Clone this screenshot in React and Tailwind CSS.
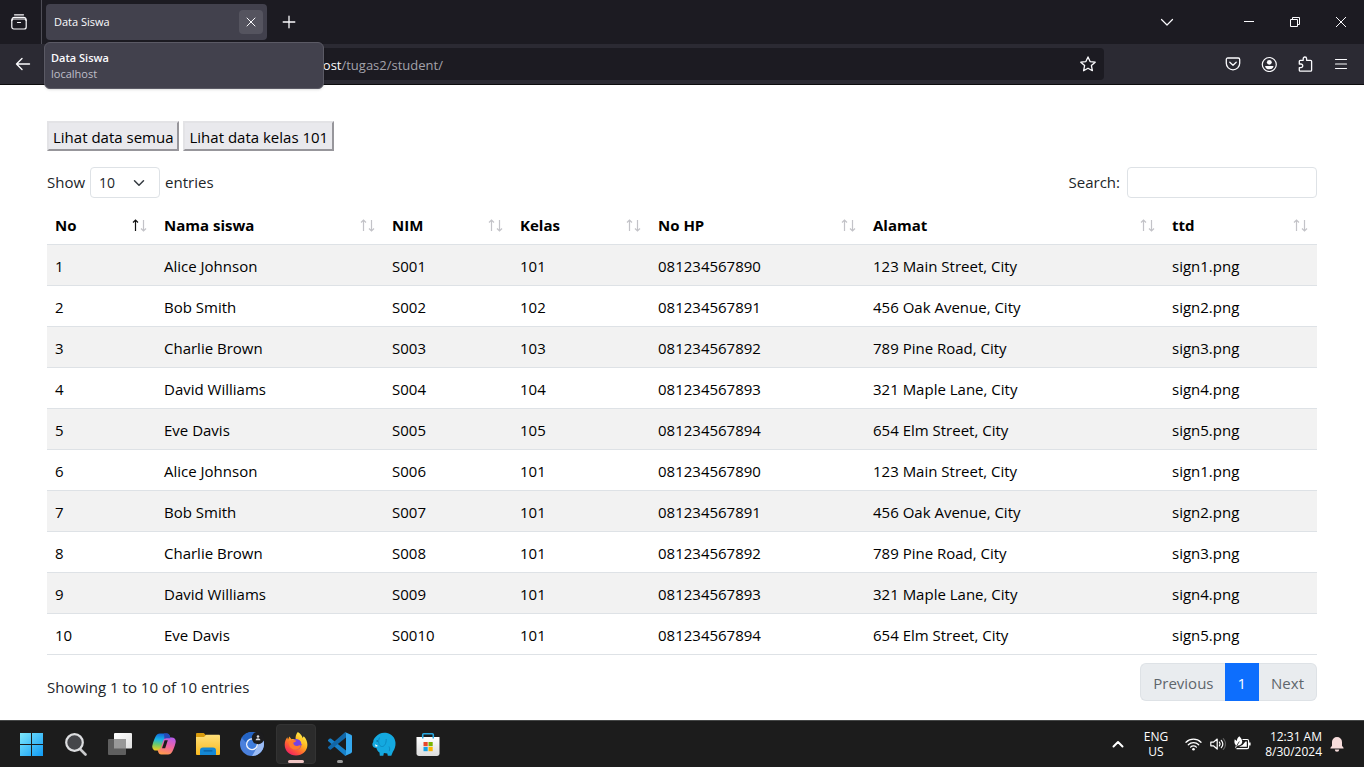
import React, { useState } from "react";

const columns = [
  { label: "No", width: "w-[109px]" },
  { label: "Nama siswa", width: "w-[228px]" },
  { label: "NIM", width: "w-[128px]" },
  { label: "Kelas", width: "w-[138px]" },
  { label: "No HP", width: "w-[215px]" },
  { label: "Alamat", width: "w-[299px]" },
  { label: "ttd", width: "w-[153px]" },
];

const students = [
  ["1", "Alice Johnson", "S001", "101", "081234567890", "123 Main Street, City", "sign1.png"],
  ["2", "Bob Smith", "S002", "102", "081234567891", "456 Oak Avenue, City", "sign2.png"],
  ["3", "Charlie Brown", "S003", "103", "081234567892", "789 Pine Road, City", "sign3.png"],
  ["4", "David Williams", "S004", "104", "081234567893", "321 Maple Lane, City", "sign4.png"],
  ["5", "Eve Davis", "S005", "105", "081234567894", "654 Elm Street, City", "sign5.png"],
  ["6", "Alice Johnson", "S006", "101", "081234567890", "123 Main Street, City", "sign1.png"],
  ["7", "Bob Smith", "S007", "101", "081234567891", "456 Oak Avenue, City", "sign2.png"],
  ["8", "Charlie Brown", "S008", "101", "081234567892", "789 Pine Road, City", "sign3.png"],
  ["9", "David Williams", "S009", "101", "081234567893", "321 Maple Lane, City", "sign4.png"],
  ["10", "Eve Davis", "S0010", "101", "081234567894", "654 Elm Street, City", "sign5.png"],
];

function Line({ children, size = 16, width = 1.25, className = "" }) {
  return (
    <svg
      width={size}
      height={size}
      viewBox="0 0 16 16"
      fill="none"
      stroke="currentColor"
      strokeWidth={width}
      strokeLinecap="round"
      strokeLinejoin="round"
      className={className}
      aria-hidden="true"
    >
      {children}
    </svg>
  );
}

function IconButton({ label, className = "", children }) {
  return (
    <button type="button" aria-label={label} className={`flex shrink-0 items-center justify-center ${className}`}>
      {children}
    </button>
  );
}

function TabStrip() {
  return (
    <div className="flex h-11 items-center bg-[#1c1b22]">
      <div className="flex h-11 w-[42px] shrink-0 items-center border-r border-[#4f4e57]">
        <IconButton label="Firefox View" className="h-9 w-[38px]">
          <Line width={1.2}>
            <path d="M3.500 .8h9" />
            <rect x=".8" y="5" width="14.4" height="10" rx="2" />
            <path d="M6.500 8.500h3" />
            <path d="M.8 6.400c0-1.800 1-3 2.600-3h9.200c1.600 0 2.600 1.200 2.600 3" />
          </Line>
        </IconButton>
      </div>
      <div className="ml-1 flex h-9 w-[221px] items-center justify-between rounded bg-[#42414d] pl-2 pr-1">
        <span className="pt-px text-[11px]">Data Siswa</span>
        <IconButton label="Close tab" className="h-6 w-6 rounded bg-[#55545f]">
          <Line width={1}>
            <path d="M4 4l8 8M12 4l-8 8" />
          </Line>
        </IconButton>
      </div>
      <IconButton label="New tab" className="h-9 w-11">
        <Line width={1.3}>
          <path d="M8 2.200v11.600M2.200 8h11.600" />
        </Line>
      </IconButton>
      <div className="ml-auto flex items-center">
        <IconButton label="List all tabs" className="mr-[41px] h-9 w-9">
          <Line width={1.2}>
            <path d="M2.500 5.500L8 11l5.500-5.500" />
          </Line>
        </IconButton>
        <IconButton label="Minimize" className="h-11 w-[46px]">
          <svg width="10" height="10" viewBox="0 0 10 10" fill="none" stroke="currentColor" aria-hidden="true">
            <path d="M0 4.500h10" />
          </svg>
        </IconButton>
        <IconButton label="Restore" className="h-11 w-[46px]">
          <svg width="10" height="10" viewBox="0 0 10 10" fill="none" stroke="currentColor" aria-hidden="true">
            <path d="M.5 2.500h7v7h-7zM2.500 2.500v-2h7v7h-2" />
          </svg>
        </IconButton>
        <IconButton label="Close" className="h-11 w-[46px]">
          <svg width="10" height="10" viewBox="0 0 10 10" fill="none" stroke="currentColor" aria-hidden="true">
            <path d="M0 0l10 10M10 0L0 10" />
          </svg>
        </IconButton>
      </div>
    </div>
  );
}

function Toolbar() {
  return (
    <div className="flex h-[41px] items-center border-b border-[#0c0c0d] bg-[#2b2a33]">
      <div className="w-[260px] shrink-0 pl-1">
        <IconButton label="Back" className="h-9 w-[38px]">
          <Line width={1.4}>
            <path d="M14.500 8H1.500M7 2.500L1.500 8L7 13.500" />
          </Line>
        </IconButton>
      </div>
      <div className="flex h-8 min-w-0 flex-1 items-center justify-between rounded bg-[#1c1b22] pl-[27px]">
        <div role="textbox" aria-label="Address" className="pt-[3px] text-[13px] text-[#a3a2ab]">
          <span className="text-[#fbfbfe]">localhost</span>/tugas2/student/
        </div>
        <IconButton label="Bookmark this page" className="h-8 w-8">
          <Line width={1.3}>
            <path d="M8 .9l2.100 4.700 5.100.6-3.800 3.400 1 5.100L8 12.200l-4.400 2.500 1-5.100L.8 6.200l5.100-.6z" />
          </Line>
        </IconButton>
      </div>
      <div className="flex w-[260px] shrink-0 justify-end pr-[5px]">
        <IconButton label="Save to Pocket" className="h-8 w-9">
          <Line width={1.3}>
            <path d="M2.800 2h10.400c.9 0 1.500.6 1.500 1.500v3.800a6.700 6.500 0 0 1-13.400 0V3.500C1.300 2.600 1.900 2 2.800 2z" />
            <path d="M4.800 6.300L8 9.300l3.200-3" />
          </Line>
        </IconButton>
        <IconButton label="Account" className="h-8 w-9">
          <Line width={1.2}>
            <circle cx="8.300" cy="8.500" r="7" />
            <circle cx="8.300" cy="6.300" r="2.400" fill="currentColor" stroke="none" />
            <path d="M4.100 9.900h8.400c0 2-1.900 3.400-4.200 3.400s-4.200-1.400-4.200-3.400z" fill="currentColor" stroke="none" />
          </Line>
        </IconButton>
        <IconButton label="Extensions" className="h-8 w-9">
          <Line width={1.3}>
            <path d="M2.300 8V5.300c0-.6.400-1 1-1h2.900V2.700a1.700 1.700 0 0 1 3.400 0v1.600h4c.6 0 1 .4 1 1v8.900c0 .6-.4 1-1 1H3.300c-.6 0-1-.4-1-1v-2.500h1.600a1.800 1.800 0 0 0 0-3.700z" />
          </Line>
        </IconButton>
        <IconButton label="Open menu" className="h-8 w-9">
          <Line width={1.2}>
            <path d="M2.500 3.500h11M2.500 8h11M2.500 12.500h11" />
          </Line>
        </IconButton>
      </div>
    </div>
  );
}

function BrowserChrome() {
  return (
    <header className="relative text-[#fbfbfe]">
      <TabStrip />
      <Toolbar />
      <div
        role="tooltip"
        className="absolute left-11 top-[42px] w-[280px] rounded-md border border-[#5b5a65] bg-[#42414d] px-[6px] pb-[6px] pt-[7px] text-[11px] leading-4 shadow-sm"
      >
        <p className="font-semibold">Data Siswa</p>
        <p className="text-[#bfbfc9]">localhost</p>
      </div>
    </header>
  );
}

function SortArrows({ ascending }) {
  return (
    <svg width="16" height="14" viewBox="0 0 16 14" fill="none" strokeWidth="1.200" aria-hidden="true">
      <path d="M3.500 13V2M1 4.500L3.500 2L6 4.500" stroke={ascending ? "#111" : "#c3c3c8"} />
      <path d="M11.500 2v11M9 10.500l2.500 2.500 2.500-2.500" stroke="#c3c3c8" />
    </svg>
  );
}

function StudentTable({ rows }) {
  return (
    <table className="mt-[6px] w-full table-fixed border-collapse text-left text-black">
      <thead>
        <tr className="border-b border-[#dee2e6]">
          {columns.map((column, index) => (
            <th key={column.label} scope="col" className={`${column.width} h-10 px-2 pb-0 pt-[3px] font-bold`}>
              <div className="flex items-center justify-between">
                {column.label}
                <SortArrows ascending={index === 0} />
              </div>
            </th>
          ))}
        </tr>
      </thead>
      <tbody>
        {rows.map((row) => (
          <tr key={row[0]} className="border-b border-[#dee2e6] odd:bg-[#f2f2f2]">
            {row.map((cell, index) => (
              <td key={columns[index].label} className="h-[41px] px-2 pb-0 pt-[2px]">
                {cell}
              </td>
            ))}
          </tr>
        ))}
      </tbody>
    </table>
  );
}

const classicButton = "border-2 border-b-[#97969b] border-l-[#e3e3e6] border-r-[#97969b] border-t-[#e3e3e6] bg-[#e9e9ed] px-1 pt-[2px] leading-6 text-black";

function StudentPage() {
  const [query, setQuery] = useState("");
  const [onlyClass101, setOnlyClass101] = useState(false);
  const rows = students.filter(
    (row) =>
      (!onlyClass101 || row[3] === "101") &&
      row.join(" ").toLowerCase().includes(query.toLowerCase())
  );

  return (
    <main className="flex-1 px-[47px] pb-[19px] pt-9 text-[15px] leading-6 text-[#212529]">
      <div className="flex gap-1">
        <button type="button" className={classicButton} onClick={() => setOnlyClass101(false)}>
          Lihat data semua
        </button>
        <button type="button" className={classicButton} onClick={() => setOnlyClass101(true)}>
          Lihat data kelas 101
        </button>
      </div>

      <div className="mt-4 flex items-center justify-between">
        <label className="flex items-center gap-[5px]">
          <span className="pb-px">Show</span>
          <span className="relative">
            <select
              defaultValue="10"
              className="block h-[31px] w-[70px] appearance-none rounded border border-[#dee2e6] bg-white pl-2 text-[14px]"
            >
              <option>10</option>
              <option>25</option>
              <option>50</option>
              <option>100</option>
            </select>
            <Line size={12} width={2} className="pointer-events-none absolute right-[15px] top-[10px] text-[#343a40]">
              <path d="M2 5l6 6 6-6" />
            </Line>
          </span>
          <span className="pb-px">entries</span>
        </label>
        <label className="flex items-center gap-[7px]">
          <span className="pb-px">Search:</span>
          <input
            type="search"
            value={query}
            onChange={(event) => setQuery(event.target.value)}
            className="h-[31px] w-[190px] rounded border border-[#dee2e6] bg-white px-2 text-[14px]"
          />
        </label>
      </div>

      <StudentTable rows={rows} />

      <div className="mt-2 flex items-start justify-between">
        <p className="pt-3">Showing 1 to 10 of 10 entries</p>
        <nav aria-label="Pagination" className="flex h-[38px] text-[#5f666c]">
          <button type="button" className="rounded-l-md border border-r-0 border-[#dee2e6] bg-[#e9ecef] pl-3 pr-[11px] pt-[2px]">
            Previous
          </button>
          <button type="button" aria-current="page" className="bg-[#0d6efd] px-[13px] pt-[2px] text-white">
            1
          </button>
          <button type="button" className="rounded-r-md border border-l-0 border-[#dee2e6] bg-[#e9ecef] px-3 pt-[2px]">
            Next
          </button>
        </nav>
      </div>
    </main>
  );
}

function StartIcon() {
  return (
    <svg width="24" height="24" viewBox="0 0 24 24" aria-hidden="true">
      <defs>
        <linearGradient id="start" x1="0" y1="0" x2="1" y2="1">
          <stop offset="0" stopColor="#7ee8fb" />
          <stop offset="1" stopColor="#0f9af5" />
        </linearGradient>
      </defs>
      <path d="M0 1h11v11H0zM12 1h11v11H12zM0 13h11v11H0zM12 13h11v11H12z" fill="url(#start)" />
    </svg>
  );
}

function SearchIcon() {
  return (
    <svg width="24" height="24" viewBox="0 0 24 24" fill="none" aria-hidden="true">
      <path d="M16.500 17.500l5 5" stroke="#c9cacc" strokeWidth="2.600" strokeLinecap="round" />
      <circle cx="10.500" cy="10.500" r="8.300" fill="#45464a" stroke="#dddee0" strokeWidth="2.200" />
    </svg>
  );
}

function TaskViewIcon() {
  return (
    <svg width="24" height="24" viewBox="0 0 24 24" aria-hidden="true">
      <defs>
        <linearGradient id="taskview" x1="0" y1="0" x2="1" y2="1">
          <stop offset="0" stopColor="#fff" />
          <stop offset="1" stopColor="#dedede" />
        </linearGradient>
      </defs>
      <rect x="6" y="1" width="18" height="15.500" rx="1" fill="url(#taskview)" />
      <rect x="0" y="7" width="18" height="16" rx="1" fill="#5f5f5f" />
      <path d="M6 7h12v9.500H6z" fill="#989898" />
    </svg>
  );
}

function CopilotIcon() {
  return (
    <svg width="24" height="24" viewBox="0 0 26 24" aria-hidden="true">
      <defs>
        <linearGradient id="copilotLeft" x1=".4" y1="0" x2=".3" y2="1">
          <stop offset="0" stopColor="#1264d8" />
          <stop offset=".35" stopColor="#18b3e6" />
          <stop offset=".65" stopColor="#6cc96b" />
          <stop offset="1" stopColor="#f5cd1c" />
        </linearGradient>
        <linearGradient id="copilotRight" x1=".7" y1="0" x2=".4" y2="1">
          <stop offset="0" stopColor="#b65be8" />
          <stop offset=".5" stopColor="#ef64a2" />
          <stop offset="1" stopColor="#ff9a4d" />
        </linearGradient>
      </defs>
      <path d="M8.500 .5h7.700c1.700 0 2.500 1 3 2.700l.8 2.700h-2.700c-1.900 0-3 .8-3.600 2.700l-2.700 7.900c-.6 1.800-1.700 2.600-3.300 2.600H4.500C1.700 19.100-.3 16.800.4 13.600 1.200 10 2.500 6.500 3.900 3.800 5 1.500 6.500.5 8.500.5z" fill="url(#copilotLeft)" />
      <path d="M17.500 23.500H9.800c-1.700 0-2.500-1-3-2.700L6 18.300c1.900 0 3.100-.9 3.800-2.900l2.600-7.700c.6-1.800 1.800-2.800 3.500-2.800h5.600c2.800 0 4.800 2.300 4.100 5.500-.8 3.600-2.100 7.100-3.500 9.800-1.100 2.300-2.600 3.300-4.600 3.300z" fill="url(#copilotRight)" />
      <path d="M13.700 8h3.400l-2.800 8.500h-3.400z" fill="#1c1c1c" />
      <path d="M13 .5h3.200c1.700 0 2.500 1 3 2.700l.8 2.700h-4.200c-1 0-1.700.2-2.300.8z" fill="#2748b8" />
    </svg>
  );
}

function ExplorerIcon() {
  return (
    <svg width="24" height="24" viewBox="0 0 24 24" aria-hidden="true">
      <defs>
        <linearGradient id="folder" x1="0" y1="0" x2="0" y2="1">
          <stop offset="0" stopColor="#ffe07a" />
          <stop offset="1" stopColor="#f9b91f" />
        </linearGradient>
      </defs>
      <path d="M0 2.200C0 1.500.5 1 1.200 1h6.500l2.600 2.500V8H0z" fill="#d99b0c" />
      <path d="M0 5h8l2.200-2.300h12.600c.7 0 1.200.5 1.200 1.200v17.800c0 .7-.5 1.300-1.200 1.300H1.200C.5 23 0 22.400 0 21.700z" fill="url(#folder)" />
      <path d="M4 23v-4.500C4 16.500 5 15.500 7 15.500h10c2 0 3 1 3 3V23z" fill="#1487d4" />
      <path d="M8 18.200h8c.7 0 .7 1.300 0 1.300H8c-.7 0-.7-1.300 0-1.300z" fill="#0b5f9f" />
    </svg>
  );
}

function ChromiumIcon() {
  return (
    <svg width="24" height="24" viewBox="0 0 24 24" aria-hidden="true">
      <circle cx="12" cy="12" r="12" fill="#4a80dc" />
      <path d="M1.800 5.800A12 12 0 0 1 22.600 6.200H12c-3 0-5.100 1.800-5.800 4.500z" fill="#2464c4" />
      <path d="M12 24l5.400-9.200A6.200 6.200 0 0 0 17.600 9h6A12 12 0 0 1 12 24z" fill="#9bbcf5" />
      <circle cx="12" cy="12.200" r="6" fill="#f3f6fc" />
      <circle cx="12" cy="12.200" r="4.700" fill="#3f7ee0" />
      <circle cx="18" cy="6" r="6.200" fill="#1c1c1e" />
      <circle cx="18" cy="4.500" r="1.300" fill="#d9d9dc" />
      <path d="M15.600 8.200c0-2.700 4.800-2.700 4.800 0z" fill="#d9d9dc" />
    </svg>
  );
}

function FirefoxIcon() {
  return (
    <svg width="24" height="24" viewBox="0 0 24 24" aria-hidden="true">
      <defs>
        <linearGradient id="fox" x1=".85" y1=".1" x2=".25" y2=".95">
          <stop offset="0" stopColor="#fff04a" />
          <stop offset=".4" stopColor="#ffb01f" />
          <stop offset=".7" stopColor="#ff6233" />
          <stop offset="1" stopColor="#f3255f" />
        </linearGradient>
      </defs>
      <path d="M13.800 0c2.600 1.500 4.300 3.600 4.800 6l1.100-1.800c2.400 2.300 3.700 5.300 3.700 8.600 0 6.200-5.100 10.800-11.400 10.800S.7 19 .7 12.800c0-3.300 1.100-5.800 2.700-7.500l.6 2.500 1.300-3.300 2.200 2.700c1.500-.5 3-.3 4.200.6C11.200 5.200 11.900 2.200 13.800 0z" fill="url(#fox)" />
      <circle cx="12.300" cy="12.200" r="5.300" fill="#7542e5" />
      <path d="M4.500 9.500c3-1.800 5.500-2 8-.8-.8 1.300-2.300 1.500-3.300 2 .5 2.400 2.100 3.600 4.300 3.300 1.300-.2 2.300-1.200 3.400-.3-.9 2.600-2.900 4-5.400 4-4.200 0-6.900-3.400-7-8.200z" fill="#ff7a2b" />
      <path d="M14.500 7c2 1 3.200 3 3.200 5.300l2.500-2.500L18 6z" fill="#ffc928" />
    </svg>
  );
}

function VsCodeIcon() {
  return (
    <svg width="24" height="24" viewBox="0 0 24 24" aria-hidden="true">
      <path d="M0 8.100l1.700-1.500c.4-.3.800-.3 1.200 0L18 18.500v5L17 23.800 0 8.900c-.2-.2-.2-.6 0-.8z" fill="#1780c8" />
      <path d="M0 15.900l1.700 1.500c.4.300.8.300 1.200 0L18 5.500v-5L17 .2 0 15.100c-.2.200-.2.600 0 .8z" fill="#1167a8" />
      <path d="M16.800 23.900L23 21.200c.6-.3 1-.8 1-1.400V4.200c0-.6-.4-1.100-1-1.400L16.800.1c.7.400 1.200.9 1.200 1.800v20.200c0 .9-.5 1.400-1.200 1.800z" fill="#35a9ef" />
    </svg>
  );
}

function ElephantIcon() {
  return (
    <svg width="24" height="24" viewBox="0 0 24 24" aria-hidden="true">
      <path d="M4 4.500C6.500 1.500 10 .2 14 .8c5.600.8 9.200 5 9.500 10 .2 3.400-.8 6.500-2.600 9l-1.600 4h-3.500l-.5-2.400-3.400-.3-.6 2.700H7.800l-.3-3.300c-1.500-.8-2.500-2.500-3.100-4.600-1.900.1-3.700-.7-4-2.800-.2-1.100.1-2.200.8-3.200C1.300 7.600 2.300 6 4 4.500z" fill="#14a9e0" />
      <path d="M7.500 5.500c-1.700 4-.8 8.500 2.200 9 2.600.4 4.700-3 4.500-7.500M17 14.500c.8 1.700.8 3 .2 4.700" fill="none" stroke="#0b87bd" strokeWidth=".9" />
      <circle cx="5.200" cy="9" r=".8" fill="#08638f" />
      <path d="M3.100 12.200l3 1.700-2.400.9z" fill="#fff" />
    </svg>
  );
}

function StoreIcon() {
  return (
    <svg width="24" height="24" viewBox="0 0 24 24" aria-hidden="true">
      <defs>
        <linearGradient id="bag" x1="0" y1="0" x2="0" y2="1">
          <stop offset="0" stopColor="#fff" />
          <stop offset="1" stopColor="#dcdcdc" />
        </linearGradient>
      </defs>
      <path d="M6.700 6V2.700c0-.7.400-1 1-1h8.600c.6 0 1 .3 1 1V6" fill="none" stroke="#28a8e0" strokeWidth="1.600" />
      <path d="M.5 5h23v16.500c0 1.500-1 2.500-2.500 2.500H3C1.500 24 .5 23 .5 21.500z" fill="url(#bag)" />
      <path d="M6 5h1.500v1.500H6zM16.500 5H18v1.500h-1.500z" fill="#28a8e0" />
      <path d="M7.500 10h4.200v4.200H7.500z" fill="#e8472a" />
      <path d="M12.500 10h4.200v4.200h-4.200z" fill="#79b400" />
      <path d="M7.500 15h4.200v4.200H7.500z" fill="#159fe3" />
      <path d="M12.500 15h4.200v4.200h-4.200z" fill="#fbb400" />
    </svg>
  );
}

const apps = [
  { name: "Start", Icon: StartIcon },
  { name: "Search", Icon: SearchIcon },
  { name: "Task View", Icon: TaskViewIcon },
  { name: "Copilot", Icon: CopilotIcon },
  { name: "File Explorer", Icon: ExplorerIcon },
  { name: "Chromium", Icon: ChromiumIcon },
  { name: "Firefox", Icon: FirefoxIcon, frame: "border-[#333] bg-[#2b2b2b]", marker: "w-4 bg-[#f0c5c3]" },
  { name: "Visual Studio Code", Icon: VsCodeIcon, marker: "w-[6px] bg-[#9a9a9a]" },
  { name: "Laragon", Icon: ElephantIcon },
  { name: "Microsoft Store", Icon: StoreIcon },
];

function Taskbar() {
  return (
    <footer className="flex h-[47px] items-center border-t border-[#454747] bg-[#1c1c1c] text-[12px] text-white">
      <div className="flex gap-1 pl-3">
        {apps.map(({ name, Icon, frame = "border-transparent", marker }) => (
          <button
            key={name}
            type="button"
            aria-label={name}
            className={`relative flex h-10 w-10 items-center justify-center rounded border ${frame}`}
          >
            <Icon />
            {marker && <span className={`absolute bottom-0 h-[3px] rounded-full ${marker}`} />}
          </button>
        ))}
      </div>

      <div className="ml-auto flex items-center pr-[19px]">
        <IconButton label="Show hidden icons" className="h-10 w-6">
          <Line width={2}>
            <path d="M3.500 10.500L8 6l4.500 4.500" />
          </Line>
        </IconButton>
        <button type="button" className="ml-[14px] text-center leading-[15px]">
          ENG
          <br />
          US
        </button>
        <button type="button" aria-label="Network, volume and battery" className="ml-[17px] flex items-center gap-2">
          <svg width="17" height="16" viewBox="0 0 17 16" fill="none" stroke="currentColor" strokeWidth="1.300" strokeLinecap="round" aria-hidden="true">
            <path d="M1 6.200a10.600 10.600 0 0 1 15 0M3.300 8.700a7.400 7.400 0 0 1 10.400 0M5.600 11.100a4.100 4.100 0 0 1 5.800 0" />
            <circle cx="8.500" cy="13.300" r="1.300" fill="currentColor" stroke="none" />
          </svg>
          <svg width="16" height="16" viewBox="0 0 16 16" fill="none" stroke="currentColor" strokeWidth="1.200" strokeLinecap="round" strokeLinejoin="round" aria-hidden="true">
            <path d="M.8 6.200v3.600h2.600L7.200 13V3L3.400 6.200z" />
            <path d="M9.400 6.100c.9 1.200.9 2.600 0 3.800M11.300 4.300c1.900 2.300 1.900 5.100 0 7.400" />
            <path d="M13.300 2.600c2.800 3.400 2.800 7.400 0 10.800" stroke="#5d5d5d" />
          </svg>
          <svg width="17" height="16" viewBox="0 0 17 16" fill="none" stroke="currentColor" strokeWidth="1.200" aria-hidden="true">
            <path d="M8.500 3.500h4.700c.8 0 1.400.6 1.400 1.400v6.400c0 .8-.6 1.400-1.400 1.400H2.500" />
            <path d="M11.500 5.500h1.300v5.200H5L8.500 9z" fill="currentColor" stroke="none" />
            <path d="M15.800 6.500v3" strokeWidth="1.600" />
            <path d="M5.300 .3c2.400 2.400 3.500 4.700 2.700 6.800-.8 1.800-2.500 2.600-4.100 2.400L1 12.600 1.900 9.200C.3 7.700 0 5.500.8 3.200l2 1.700c.2-1.900 1-3.500 2.500-4.600z" fill="currentColor" stroke="none" />
            <path d="M2.300 10.500L5.300 5.500" stroke="#1c1c1c" strokeWidth=".8" />
          </svg>
        </button>
        <button type="button" className="ml-[14px] text-right leading-[15px]">
          12:31 AM
          <br />
          8/30/2024
        </button>
        <IconButton label="Notifications" className="ml-[7px] h-10 w-4">
          <svg width="14" height="16" viewBox="0 0 14 16" fill="#f6dcdb" aria-hidden="true">
            <path d="M7 1a5 5 0 0 1 5 5v3.700l1.500 2c.3.400.1.900-.4.900H.9c-.5 0-.7-.5-.4-.9l1.500-2V6a5 5 0 0 1 5-5zM4.800 13.500h4.400a2.200 2.200 0 0 1-4.400 0z" />
          </svg>
        </IconButton>
      </div>
    </footer>
  );
}

export default function App() {
  return (
    <div className="flex min-h-screen flex-col bg-white font-['Open_Sans','Noto_Sans',sans-serif]">
      <BrowserChrome />
      <StudentPage />
      <Taskbar />
    </div>
  );
}
